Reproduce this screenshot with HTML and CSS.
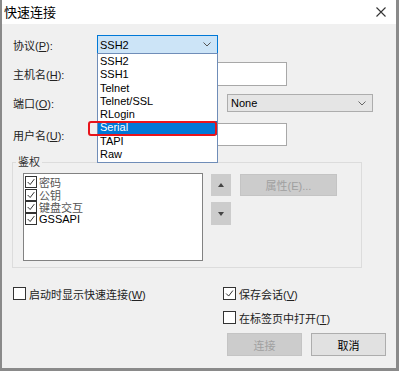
FILE: index.html
```html
<!DOCTYPE html>
<html lang="zh-CN">
<head>
<meta charset="utf-8">
<title>快速连接</title>
<link rel="stylesheet" href="styles.css">
</head>
<body>
<div class="window">
  <div class="titlebar">
    <span class="title">快速连接</span>
    <svg class="close" width="10" height="10" viewBox="0 0 10 10"><path d="M0.5 0.5 L9.5 9.5 M9.5 0.5 L0.5 9.5" stroke="#333" stroke-width="1.1" fill="none"/></svg>
  </div>
  <div class="body">
    <div class="row r1">
      <span class="lbl">协议(<u>P</u>):</span>
      <div class="combo-wrap">
        <div class="combo focused"><span>SSH2</span><svg class="chev" width="8" height="5" viewBox="0 0 8 5"><path d="M0.5 0.5 L4 4 L7.5 0.5" stroke="#555" fill="none"/></svg></div>
        <ul class="droplist">
          <li>SSH2</li>
          <li>SSH1</li>
          <li>Telnet</li>
          <li>Telnet/SSL</li>
          <li>RLogin</li>
          <li class="sel">Serial</li>
          <li>TAPI</li>
          <li>Raw</li>
        </ul>
        <div class="mark"></div>
      </div>
    </div>
    <div class="row r2">
      <span class="lbl">主机名(<u>H</u>):</span>
      <div class="input wide"></div>
    </div>
    <div class="row r3">
      <span class="lbl">端口(<u>O</u>):</span>
      <div class="input port"></div>
      <div class="combo plain"><span>None</span><svg class="chev" width="8" height="5" viewBox="0 0 8 5"><path d="M0.5 0.5 L4 4 L7.5 0.5" stroke="#666" fill="none"/></svg></div>
    </div>
    <div class="row r4">
      <span class="lbl">用户名(<u>U</u>):</span>
      <div class="input wide user"></div>
    </div>

    <div class="group">
      <span class="legend">鉴权</span>
      <div class="group-body">
        <div class="listbox">
          <div class="litem"><span class="cb small"><svg viewBox="0 0 12 12"><path d="M2 6 L5 9 L10 2.5" stroke="#222" stroke-width="1.1" fill="none"/></svg></span><span class="cn">密码</span></div>
          <div class="litem"><span class="cb small"><svg viewBox="0 0 12 12"><path d="M2 6 L5 9 L10 2.5" stroke="#222" stroke-width="1.1" fill="none"/></svg></span><span class="cn">公钥</span></div>
          <div class="litem"><span class="cb small"><svg viewBox="0 0 12 12"><path d="M2 6 L5 9 L10 2.5" stroke="#222" stroke-width="1.1" fill="none"/></svg></span><span class="cn">键盘交互</span></div>
          <div class="litem"><span class="cb small"><svg viewBox="0 0 12 12"><path d="M2 6 L5 9 L10 2.5" stroke="#222" stroke-width="1.1" fill="none"/></svg></span><span>GSSAPI</span></div>
        </div>
        <div class="arrows">
          <div class="abtn up"><svg width="6" height="4" viewBox="0 0 6 4"><path d="M0 4 L3 0 L6 4 Z" fill="#444"/></svg></div>
          <div class="abtn down"><svg width="6" height="4" viewBox="0 0 6 4"><path d="M0 0 L6 0 L3 4 Z" fill="#444"/></svg></div>
        </div>
        <div class="btn disabled prop">属性(E)...</div>
      </div>
    </div>

    <div class="bottom">
      <div class="chk"><span class="cb"></span><span>启动时显示快速连接(<u>W</u>)</span></div>
      <div class="chk"><span class="cb"><svg viewBox="0 0 13 13"><path d="M2.5 6.5 L5.5 9.5 L10.5 3" stroke="#222" stroke-width="1.1" fill="none"/></svg></span><span>保存会话(<u>V</u>)</span></div>
      <div></div>
      <div class="chk"><span class="cb"></span><span>在标签页中打开(<u>T</u>)</span></div>
    </div>
    <div class="actions">
      <div class="btn disabled">连接</div>
      <div class="btn">取消</div>
    </div>
  </div>
</div>
</body>
</html>
```

FILE: styles.css
```css
* { box-sizing: border-box; }
html, body { margin: 0; padding: 0; }
body {
  width: 399px;
  height: 371px;
  overflow: hidden;
  font-family: "Liberation Sans", "Noto Sans CJK SC", sans-serif;
  font-size: 11px;
  color: #1a1a1a;
  background: #f0f0f0;
}
u { text-decoration: underline; text-underline-offset: 1px; }

.window {
  width: 399px;
  height: 371px;
  border-left: 2px solid #8a8a8a;
  border-right: 3px solid #8a8a8a;
  border-bottom: 3px solid #8a8a8a;
  display: flex;
  flex-direction: column;
  background: #f0f0f0;
}

.titlebar {
  height: 24px;
  background: #fff;
  display: flex;
  align-items: center;
  justify-content: space-between;
  padding: 0 10px 0 2px;
  flex: none;
}
.title {
  font-family: "Noto Sans CJK SC", sans-serif;
  font-size: 13px;
  color: #000;
  line-height: 24px;
}
.close { display: block; }

.body {
  flex: 1;
  padding: 11px 10px 0 11px;
  display: flex;
  flex-direction: column;
}

.row { display: flex; align-items: center; }
.r1 { height: 19px; }
.r2 { height: 24px; margin-top: 8px; }
.r3 { height: 18px; margin-top: 8px; }
.r4 { height: 23px; margin-top: 11px; }

.lbl {
  width: 84px;
  flex: none;
  color: #222;
}

.combo-wrap { position: relative; width: 121px; height: 19px; }
.combo {
  height: 100%;
  display: flex;
  align-items: center;
  justify-content: space-between;
  padding: 0 6px 0 2px;
  color: #000;
}
.combo.focused {
  background: #cce4f7;
  border: 1px solid #0078d7;
}
.combo.plain {
  width: 146px;
  margin-left: 10px;
  background: #e5e5e5;
  border: 1px solid #adadad;
  padding-left: 3px;
  padding-right: 6px;
}
.chev { display: block; }

.droplist {
  position: absolute;
  left: 0;
  top: 18px;
  width: 121px;
  margin: 0;
  padding: 1px 0;
  list-style: none;
  background: #fff;
  border: 1px solid #6f8db8;
  z-index: 5;
}
.droplist li {
  height: 13.3px;
  line-height: 13.3px;
  padding-left: 2px;
  color: #000;
}
.droplist li.sel { background: #0078d7; color: #fff; }

.mark {
  position: absolute;
  left: -9px;
  top: 86px;
  width: 129px;
  height: 15px;
  border: 2px solid #e8141b;
  border-radius: 3px;
  z-index: 6;
}

.input {
  height: 100%;
  background: #fff;
  border: 1px solid #a8a8a8;
}
.input.wide { width: 190px; }
.input.port { width: 120px; }

.group {
  margin-top: 16px;
  margin-left: -1px;
  width: 350px;
  height: 106px;
  border: 1px solid #dcdcdc;
  padding: 0 10px;
}
.legend {
  display: block;
  width: max-content;
  height: 14px;
  line-height: 14px;
  margin: -8px 0 0 -7px;
  padding: 0 2px;
  background: #f0f0f0;
  color: #333;
}
.group-body {
  display: flex;
  align-items: flex-start;
  margin-top: 4px;
}
.listbox {
  width: 180px;
  height: 88px;
  background: #fff;
  border: 1px solid #828282;
  padding: 2px 0 0 1px;
}
.litem {
  display: flex;
  align-items: center;
  height: 12.4px;
  gap: 2px;
  color: #000;
}
.litem .cn { color: #555; }

.cb {
  width: 13px;
  height: 13px;
  border: 1px solid #333;
  background: #fff;
  flex: none;
  display: block;
}
.cb.small { width: 12px; height: 12px; }
.cb svg { display: block; width: 100%; height: 100%; }

.arrows {
  margin-left: 8px;
  margin-top: 1px;
  display: flex;
  flex-direction: column;
  gap: 6px;
}
.abtn {
  width: 20px;
  height: 22px;
  background: #cccccc;
  display: flex;
  align-items: center;
  justify-content: center;
}
.abtn.down { height: 23px; }
.abtn svg { display: block; }

.btn {
  width: 75px;
  height: 23px;
  display: flex;
  align-items: center;
  justify-content: center;
  background: #e1e1e1;
  border: 1px solid #adadad;
  color: #000;
}
.btn.disabled {
  background: #cccccc;
  border-color: #c4c4c4;
  color: #a0a0a0;
}
.btn.prop {
  width: 97px;
  height: 22px;
  margin-left: 9px;
  margin-top: 1px;
}

.bottom {
  margin-top: 19px;
  display: grid;
  grid-template-columns: 210px 1fr;
  row-gap: 11px;
}
.chk {
  display: flex;
  align-items: center;
  gap: 3px;
  height: 13px;
  color: #222;
}
.actions {
  margin-top: 9px;
  display: flex;
  justify-content: flex-end;
  gap: 9px;
}
```
